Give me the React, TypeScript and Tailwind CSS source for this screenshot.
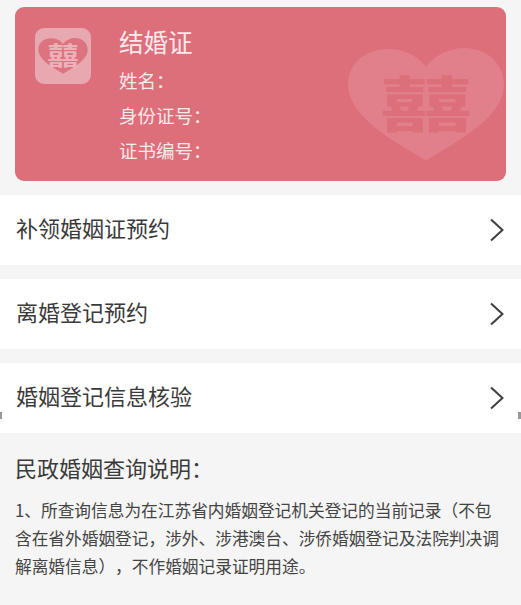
const font = { fontFamily: '"Noto Sans CJK SC", "Noto Sans", sans-serif' };

function Heart({ className, fill }: { className?: string; fill: string }) {
  return (
    <svg viewBox="0 0 160 114" className={className}>
      <path
        d="M80 114 C58 100 0 72 1 36 C2 12 22 1 42 1 C58 1 72 8 80 19 C88 8 103 0 119 0 C140 0 159 14 159 38 C159 72 102 100 80 114 Z"
        fill={fill}
      />
    </svg>
  );
}

function Row({ label }: { label: string }) {
  return (
    <div className="flex h-[70px] items-center justify-between bg-white pl-4 pr-[17px]">
      <span className="pb-[6px] text-[22px] leading-[30px] text-[#3a3a3a]">{label}</span>
      <svg viewBox="0 0 14 24" className="h-6 w-3.5" fill="none" stroke="#3f3f3f" strokeWidth="2">
        <path d="M1 1.5 L12.5 12 L1 22.5" />
      </svg>
    </div>
  );
}

export default function App() {
  return (
    <div style={font} className="relative h-[605px] w-[521px] overflow-hidden bg-[#f5f5f5]">
      <div className="px-[15px] pb-3.5 pt-[7px]">
        <div className="relative h-[174px] overflow-hidden rounded-[9px] bg-[#dc6f7a] pl-5 pt-[21px]">
          <div className="flex gap-7">
            <div className="relative flex h-14 w-14 shrink-0 items-center justify-center rounded-[9px] bg-[#e8a8b0]">
              <Heart className="w-[50px]" fill="#dc7480" />
              <span className="absolute left-0 top-[5px] w-full origin-center scale-y-[0.8] text-center text-[31px] font-bold leading-[44px] text-[#ecb2b9]">囍</span>
            </div>
            <div className="flex flex-col text-[#fbe9ea]">
              <div className="-mt-px text-[24.5px] leading-[30px]">结婚证</div>
              <div className="mt-[6px] text-[18.5px] leading-[35px]">{"姓名\uFF1A"}</div>
              <div className="text-[18.5px] leading-[35px]">{"身份证号\uFF1A"}</div>
              <div className="text-[18.5px] leading-[35px]">{"证书编号\uFF1A"}</div>
            </div>
          </div>
          <div className="absolute left-[332px] top-[41px] flex h-[113px] w-[158px] items-center justify-center">
            <Heart className="w-[158px]" fill="#e17f8b" />
            <span className="absolute left-0 top-[3px] w-full origin-center scale-y-[0.66] text-center text-[92px] font-bold leading-[100px] text-[#dc6f7a]">囍</span>
          </div>
        </div>
      </div>
      <div className="flex flex-col gap-3.5">
        <Row label="补领婚姻证预约" />
        <Row label="离婚登记预约" />
        <Row label="婚姻登记信息核验" />
      </div>
      <div className="px-[15px] pt-[19px] text-[#3a3a3a]">
        <div className="text-[22px] leading-[30px]">{"民政婚姻查询说明\uFF1A"}</div>
        <p className="mt-[14px] w-[490px] text-[16.7px] leading-[28px] text-[#444] [text-spacing-trim:space-all]">
          {"1\u3001所查询信息为在江苏省内婚姻登记机关登记的当前记录\uFF08不包含在省外婚姻登记\uFF0C涉外\u3001涉港澳台\u3001涉侨婚姻登记及法院判决调解离婚信息\uFF09\uFF0C不作婚姻记录证明用途\u3002"}
        </p>
      </div>
      <div className="absolute left-0 top-[412px] h-[7px] w-[2px] bg-[#999]" />
      <div className="absolute right-0 top-[412px] h-[7px] w-[3px] bg-[#999]" />
    </div>
  );
}
